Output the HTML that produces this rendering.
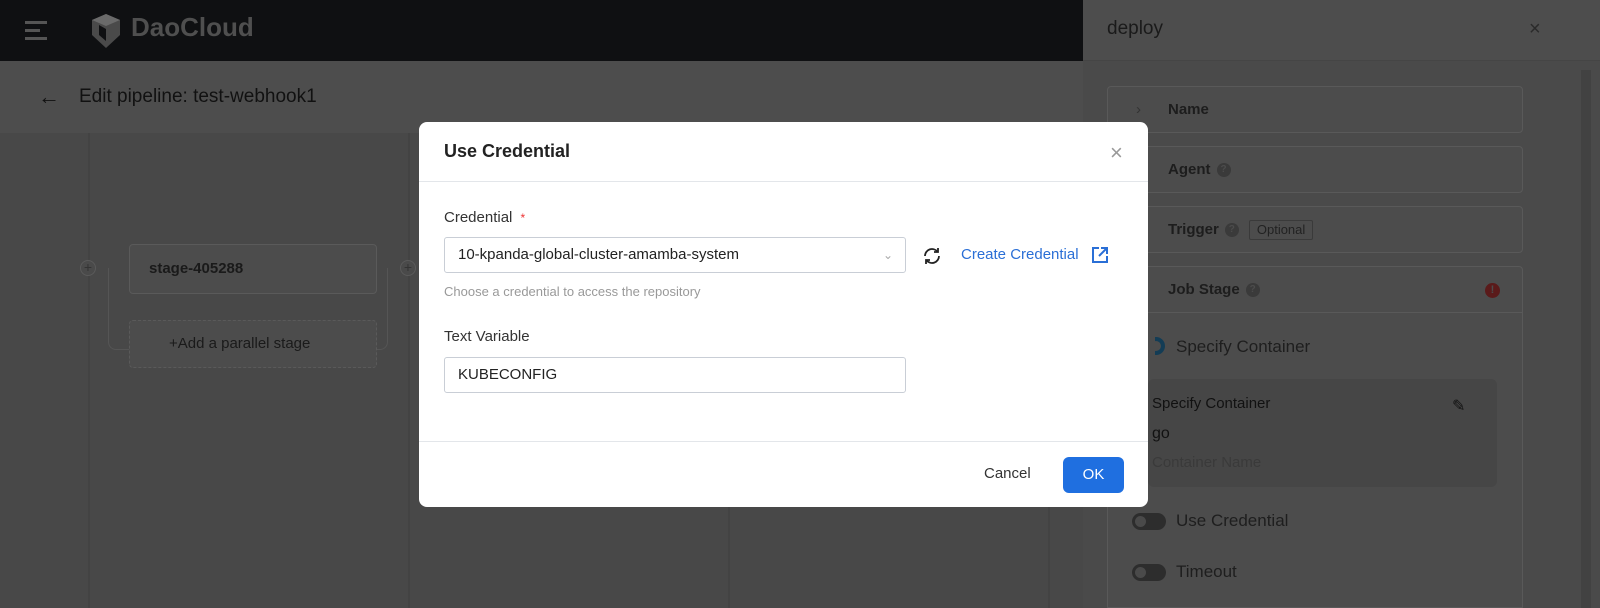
<!DOCTYPE html>
<html><head><meta charset="utf-8"><style>
*{box-sizing:border-box;margin:0;padding:0}
body{width:1600px;height:608px;overflow:hidden;position:relative;background:#484848;font-family:"Liberation Sans",sans-serif;}
.abs{position:absolute}
.top{left:0;top:0;width:1600px;height:61px;background:#0f1012}
.hdr{left:0;top:61px;width:1083px;height:72px;background:#4d4d4d}
.col{top:133px;width:2px;height:475px;background:#434343}
.card{border:1px solid #5a5a5a;background:#4c4c4c;border-radius:4px}
.drawer{left:1083px;top:0;width:517px;height:608px;background:#4a4a4a}
.dc{left:1107px;width:416px;height:47px;border:1px solid #595959;border-radius:4px;background:#4c4c4c;font-weight:bold;color:#1d1d1d;font-size:15px;padding-left:60px;line-height:45px}
.q{display:inline-block;width:14px;height:14px;border-radius:50%;background:#3a3a3a;color:#4c4c4c;font-size:10px;line-height:14px;text-align:center;vertical-align:middle;margin-left:6px}
.modal{left:419px;top:122px;width:729px;height:385px;background:#fff;border-radius:8px}
.lbl{font-size:15px;color:#333}
.inp{border:1px solid #c9ced6;border-radius:3px;height:36px;font-size:15px;color:#222;padding-left:13px;line-height:34px}
.tog{width:34px;height:17px;border-radius:9px;background:#2d2d2d}
.tog:after{content:"";position:absolute;left:3px;top:3px;width:11px;height:11px;border-radius:50%;background:#4a4a4a}
</style></head><body>
<div class="abs top"></div>
<div class="abs" style="left:25px;top:21px;width:22px;height:3px;background:#555"></div>
<div class="abs" style="left:25px;top:29px;width:15px;height:3px;background:#555"></div>
<div class="abs" style="left:25px;top:37px;width:22px;height:3px;background:#555"></div>
<svg class="abs" style="left:89px;top:13px" width="35" height="36" viewBox="0 0 35 36"><path d="M17 1 L31 7 L31 22 L17 35 L3 22 L3 7Z" fill="#4a4a4a"/><path d="M17 1 L31 7 L17 13 L3 7Z" fill="#6a6a6a"/><path d="M10 12 L17 16 L17 28 L10 22Z" fill="#0f1012"/></svg>
<div class="abs" style="left:131px;top:12px;font-size:26px;font-weight:bold;color:#4f4f4f;letter-spacing:0">DaoCloud</div>
<div class="abs hdr"></div>
<div class="abs" style="left:38px;top:84px;font-size:22px;color:#111;font-weight:bold">←</div>
<div class="abs" style="left:79px;top:86px;font-size:19px;color:#111">Edit pipeline: test-webhook1</div>
<div class="abs col" style="left:88px"></div>
<div class="abs col" style="left:408px"></div>
<div class="abs col" style="left:728px"></div>
<div class="abs col" style="left:1048px"></div>
<div class="abs" style="left:108px;top:268px;width:280px;height:82px;border:1px solid #555;border-top:none;border-radius:0 0 8px 8px"></div>
<div class="abs" style="left:80px;top:260px;width:16px;height:16px;border-radius:50%;border:1px solid #5a5a5a;background:#4a4a4a;color:#333;font-size:14px;line-height:13px;text-align:center">+</div>
<div class="abs" style="left:400px;top:260px;width:16px;height:16px;border-radius:50%;border:1px solid #5a5a5a;background:#4a4a4a;color:#333;font-size:14px;line-height:13px;text-align:center">+</div>
<div class="abs card" style="left:129px;top:244px;width:248px;height:50px;font-weight:bold;font-size:15px;color:#1a1a1a;padding:15px 0 0 19px">stage-405288</div>
<div class="abs card" style="left:129px;top:320px;width:248px;height:48px;border-style:dashed;font-size:15px;color:#1a1a1a;padding:14px 0 0 39px">+Add a parallel stage</div>

<div class="abs drawer"></div>
<div class="abs" style="left:1083px;top:0;width:517px;height:61px;background:#4d4d4d;border-bottom:1px solid #454545"></div>
<div class="abs" style="left:1107px;top:18px;font-size:19px;color:#1a1a1a">deploy</div>
<div class="abs" style="left:1529px;top:18px;font-size:20px;color:#2a2a2a">×</div>
<div class="abs" style="left:1581px;top:70px;width:10px;height:538px;background:#424242"></div>
<div class="abs dc" style="top:86px"><span class="abs" style="left:28px;top:0;color:#333;font-weight:normal">›</span>Name</div>
<div class="abs dc" style="top:146px">Agent<span class="q">?</span></div>
<div class="abs dc" style="top:206px">Trigger<span class="q">?</span><span style="display:inline-block;margin-left:10px;border:1px solid #3a3a3a;border-radius:2px;font-weight:normal;font-size:13px;line-height:18px;padding:0 7px;color:#222">Optional</span></div>
<div class="abs dc" style="top:266px;height:342px;border-radius:4px 4px 0 0">Job Stage<span class="q">?</span></div>
<div class="abs" style="left:1107px;top:312px;width:416px;height:1px;background:#595959"></div>
<div class="abs" style="left:1485px;top:283px;width:15px;height:15px;border-radius:50%;background:#5a1a1a;color:#4c4c4c;font-size:11px;font-weight:bold;text-align:center;line-height:15px">!</div>
<div class="abs" style="left:1147px;top:337px;width:18px;height:18px;border-radius:50%;border:4px solid #133c55;clip-path:inset(0 0 0 8px)"></div>
<div class="abs" style="left:1176px;top:337px;font-size:17px;color:#1e1e1e">Specify Container</div>
<div class="abs" style="left:1148px;top:379px;width:349px;height:108px;background:#464646;border-radius:6px"></div>
<div class="abs" style="left:1152px;top:395px;font-size:15px;color:#111">Specify Container</div>
<div class="abs" style="left:1452px;top:396px;font-size:16px;color:#111">✎</div>
<div class="abs" style="left:1152px;top:425px;font-size:16px;color:#111">go</div>
<div class="abs" style="left:1152px;top:454px;font-size:15px;color:#3a3a3a">Container Name</div>
<div class="abs tog" style="left:1132px;top:513px"></div>
<div class="abs" style="left:1176px;top:511px;font-size:17px;color:#1e1e1e">Use Credential</div>
<div class="abs tog" style="left:1132px;top:564px"></div>
<div class="abs" style="left:1176px;top:562px;font-size:17px;color:#1e1e1e">Timeout</div>

<div class="abs modal">
 <div class="abs" style="left:25px;top:19px;font-size:18px;color:#222;font-weight:bold">Use Credential</div>
 <div class="abs" style="left:691px;top:18px;font-size:22px;color:#999">×</div>
 <div class="abs" style="left:0;top:59px;width:729px;height:1px;background:#e3e6ea"></div>
 <div class="abs lbl" style="left:25px;top:87px">Credential <span style="color:#e33;margin-left:4px;font-size:12px">*</span></div>
 <div class="abs inp" style="left:25px;top:115px;width:462px">10-kpanda-global-cluster-amamba-system<span class="abs" style="right:12px;top:0;color:#aaa;font-size:12px">&#8964;</span></div>
 <svg class="abs" style="left:503px;top:124px" width="20" height="20" viewBox="0 0 20 20" fill="none" stroke="#222" stroke-width="1.8"><path d="M3 10a7 7 0 0 1 12.5-4.3M17 10a7 7 0 0 1-12.5 4.3"/><path d="M16 2v4h-4M4 18v-4h4"/></svg>
 <div class="abs" style="left:542px;top:124px;font-size:15px;color:#2a6fd6">Create Credential</div>
 <svg class="abs" style="left:672px;top:124px" width="18" height="18" viewBox="0 0 18 18" fill="none" stroke="#2a6fd6" stroke-width="2"><path d="M8 2H2v14h14v-6M10 2h6v6M16 2L8 10"/></svg>
 <div class="abs" style="left:25px;top:162px;font-size:13px;color:#999">Choose a credential to access the repository</div>
 <div class="abs lbl" style="left:25px;top:206px">Text Variable</div>
 <div class="abs inp" style="left:25px;top:235px;width:462px">KUBECONFIG</div>
 <div class="abs" style="left:0;top:319px;width:729px;height:1px;background:#e3e6ea"></div>
 <div class="abs" style="left:565px;top:343px;font-size:15px;color:#333">Cancel</div>
 <div class="abs" style="left:644px;top:335px;width:61px;height:36px;border-radius:6px;background:#1f6fe0;color:#fff;font-size:15px;text-align:center;line-height:36px">OK</div>
</div>
</body></html>
